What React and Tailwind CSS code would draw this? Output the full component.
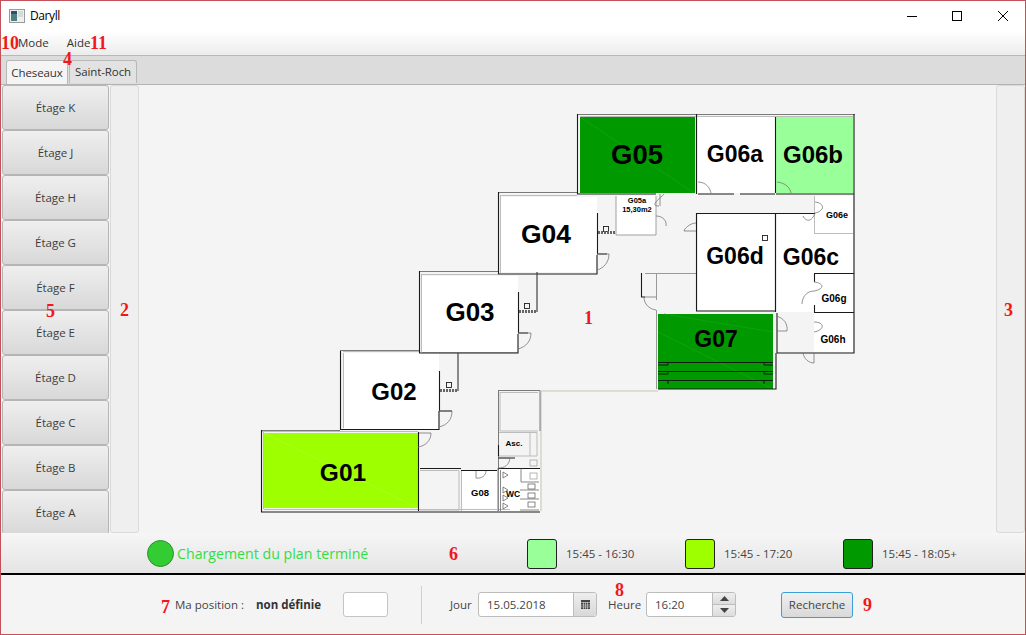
import React from "react";

const floors = ["K", "J", "H", "G", "F", "E", "D", "C", "B", "A"];

const Note = ({ x, y, children }) => (
  <span
    className="absolute z-10 font-bold text-[#f01818] text-[18px] leading-none"
    style={{ left: x, top: y, fontFamily: '"Liberation Serif", serif' }}
  >
    {children}
  </span>
);

const Rooms = [
  [580, 117, 115, 76, "#009900"],
  [698, 117, 77, 76, "#ffffff"],
  [776, 117, 77, 76, "#99ff99"],
  [616, 196, 40, 39, "#ffffff"],
  [501, 197, 96, 75, "#ffffff"],
  [422, 276, 96, 76, "#ffffff"],
  [344, 353, 95, 76, "#ffffff"],
  [264, 433, 154, 75, "#9eff00"],
  [698, 214, 76, 96, "#ffffff"],
  [777, 214, 76, 59, "#ffffff"],
  [777, 273, 37, 39, "#ffffff"],
  [815, 196, 38, 37, "#ffffff"],
  [814, 274, 39, 38, "#ffffff"],
  [814, 313, 39, 39, "#ffffff"],
  [658, 314, 115, 75, "#009900"],
  [462, 471, 35, 40, "#ffffff"],
  [498, 468, 42, 43, "#ffffff"],
];

const Labels = [
  ["G05", 637, 164, 27.5],
  ["G06a", 735, 162, 23],
  ["G06b", 813, 163, 24],
  ["G04", 546, 243, 26.5],
  ["G03", 470, 321, 26],
  ["G02", 394, 400, 24],
  ["G01", 343, 481, 24.5],
  ["G06d", 735, 264, 23],
  ["G06c", 811, 265, 23],
  ["G07", 716, 347, 23],
  ["G06e", 837, 218, 9],
  ["G06g", 834, 302, 10],
  ["G06h", 833, 343, 10],
  ["G05a", 637, 203, 7.5],
  ["15,30m2", 637, 212, 7.5],
  ["Asc.", 514, 446, 8],
  ["G08", 480, 496, 9.5],
  ["WC", 513, 497, 8.5],
];

function FloorPlan() {
  return (
    <svg width="856" height="448" viewBox="139 85 856 448" className="block">
      {Rooms.map(([x, y, w, h, c], i) => (
        <rect key={i} x={x} y={y} width={w} height={h} fill={c} />
      ))}

      {/* pale diagonals across the coloured rooms */}
      <path d="M580 117L694 193M658 332L773 389M664 314L773 332" stroke="#1ea51e" strokeWidth="0.6" fill="none" />
      <path d="M264 433L418 508" stroke="#b5ff40" strokeWidth="0.5" fill="none" />

      {/* light grey inner wall lines */}
      <g stroke="#bcbcbc" strokeWidth="1" fill="none">
        <path d="M580 116.5H853" />
        <path d="M616 196V235H656V196" stroke="#a0a0a0" />
        <path d="M501 195.5H577M500.5 195V273" />
        <path d="M421.5 275V352M422 352.5H517M421 274.5H498" />
        <path d="M343.5 353V428M345 429.5H438M343 351.5H419" />
        <path d="M263.5 431V509M264 509.5H510M262 431.5H418" />
        <path d="M814 233.5H853M814.5 196V233" />
        <path d="M500 392.5H538M500 392V431H538M420 470.5H459V510H420" />
        <path d="M498 432.5H537V456H498M530 433V456" />
        <path d="M461.5 470V511M497.5 468V511" />
      </g>
      <path d="M541 391H658" stroke="#c9c3b4" strokeWidth="1" fill="none" />
      <path d="M541 391V511" stroke="#c9c3b4" strokeWidth="1" fill="none" />
      <path d="M645 273.5H696" stroke="#999" strokeWidth="1" fill="none" />
      <path d="M656.5 273V300M656.5 310V389" stroke="#999" strokeWidth="1" fill="none" />

      {/* dark outlines */}
      <g stroke="#7a7a7a" strokeWidth="1" fill="none">
        <path d="M577 114.5H855" />
        <path d="M498 192.5H577" />
        <path d="M419 271.5H498" />
        <path d="M340 350.5H419" />
        <path d="M261 430.5H340" />
        <path d="M498 390.5H540V431M498.5 390V470" />
      </g>
      <g stroke="#1a1a1a" strokeWidth="1.1" fill="none">
        <path d="M577.5 114V194H656" />
        <path d="M696.5 114V194" />
        <path d="M775.5 117V193" />
        <path d="M854 114V353H777V313" />
        <path d="M698 194H734M740 194H775M776 194H854" />
        <path d="M696 213.5H815" />
        <path d="M696.5 213V311H775" />
        <path d="M775.5 214V312" />
        <path d="M814 273.5H854M814 312.5H854M814.5 274V282M814.5 305V312" />
        <path d="M776 353V389H658" />
        <path d="M498.5 192V274H597V255" />
        <path d="M597.5 213V254H607" />
        <path d="M419.5 271V353H518V334" />
        <path d="M518.5 292V333H528" />
        <path d="M340.5 351V430" />
        <path d="M340 429.5H439V411" />
        <path d="M439.5 371V411H452" />
        <path d="M261.5 430V512H540" />
        <path d="M418.5 432V511" />
        <path d="M420 468.5H461M461 470.5H497M498 468.5H540" />
        <path d="M498.5 445V456M498 458H515" />
        <path d="M641.5 273V297H645" />
      </g>
      <path d="M537 272V312M458 353V391" stroke="#444" strokeWidth="1.2" fill="none" />

      {/* doors */}
      <g stroke="#777" strokeWidth="0.8" fill="none">
        <path d="M698 182C706 182 710 188 711 193" />
        <path d="M777 182C786 183 790 188 791 193" />
        <path d="M660 194V206M659 206C648 206 662 197 664 194" />
        <path d="M656 216C663 216 667 221 666 226" />
        <path d="M696 223C690 223 684 229 684 231H696" />
        <path d="M815 202C825 203 825 211 815 213M815 213C812 222 806 222 803 216" />
        <path d="M597 254H609C609 262 604 268 597 270" />
        <path d="M518 333H531C531 341 526 347 518 349" />
        <path d="M439 411H452C452 420 447 425 439 427" />
        <path d="M419 433H431C431 441 425 446 418 447" />
        <path d="M656 297H644C644 304 649 309 656 310" />
        <path d="M776 316C784 318 788 324 787 331H776" />
        <path d="M814 282C824 283 825 289 814 291M814 291C806 291 802 298 802 304" />
        <path d="M814 322C825 322 825 330 814 332M803 353C804 359 809 363 814 363V353" />
        <path d="M476 471V478C482 479 486 475 486 471" />
        <path d="M498 458H510C509 465 505 468 498 468" />
      </g>

      {/* stairs */}
      <g stroke="#111" strokeWidth="0.9" fill="none">
        <path d="M658 362.5H773M658 371.5H773M658 380.5H773" />
        <path d="M658 365H668V362M658 374H668V371M668 380V384M764 362V365H773M764 371V374H773M764 380V384" />
      </g>

      {/* shafts */}
      <g fill="none" stroke="#222" strokeWidth="0.9">
        <rect x="603.5" y="226.5" width="5" height="5" />
        <rect x="524.5" y="303.5" width="5" height="5" />
        <rect x="446.5" y="382.5" width="5" height="5" />
        <rect x="762.5" y="235.5" width="5" height="5" />
      </g>
      <path d="M598 232.5H615M519 311.5H537M440 390.5H458" stroke="#666" strokeWidth="3" strokeDasharray="2 1" fill="none" />

      {/* WC fixtures */}
      <g fill="none" stroke="#555" strokeWidth="0.7">
        <path d="M503 472L508 475L503 478ZM503 487L508 490L503 493ZM503 495L508 498L503 501ZM503 503L508 506L503 509Z" />
        <path d="M498.5 468V511M500.5 470V511" />
        <path d="M521 468V482H539M520 490H539M520 499H539M520 510H539" />
        <rect x="530" y="460" width="7" height="6" stroke="#999" />
        <rect x="530" y="473" width="7" height="6" stroke="#999" />
        <rect x="528" y="484" width="7" height="5" />
        <rect x="528" y="493" width="7" height="5" />
        <rect x="528" y="502" width="7" height="5" />
      </g>

      {Labels.map(([t, x, y, s]) => (
        <text
          key={t}
          x={x}
          y={y}
          textAnchor="middle"
          fontSize={s}
          fontWeight="700"
          fill="#000"
          fontFamily='"Liberation Sans", sans-serif'
        >
          {t}
        </text>
      ))}
    </svg>
  );
}

function Swatch({ color, label, className }) {
  return (
    <div className={`flex items-center gap-[9px] ${className}`}>
      <div className="w-[30px] h-[30px] rounded-[3px] border border-[#222]" style={{ background: color }} />
      <span className="text-[11.5px] text-[#444]">{label}</span>
    </div>
  );
}

export default function App() {
  return (
    <div
      className="relative w-[1026px] h-[635px] overflow-hidden border border-[#c4505a] bg-[#f4f4f4] flex flex-col text-[12px] text-[#333]"
      style={{ fontFamily: '"Open Sans", "Noto Sans", sans-serif' }}
    >
      {/* title bar */}
      <div className="h-[30px] shrink-0 bg-white flex items-center pl-[8px]">
        <svg width="16" height="14" viewBox="0 0 16 14" className="mr-[5px]">
          <rect x="0.5" y="0.5" width="15" height="13" fill="#eef0f0" stroke="#9a9a9a" />
          <rect x="2" y="2" width="6" height="10" fill="#4d7f83" />
          <rect x="9" y="2" width="5" height="6" fill="#d3dcdc" />
          <rect x="2" y="2" width="6" height="3" fill="#2f4f6a" />
        </svg>
        <span className="text-[12px] text-black tracking-[-0.4px]">Daryll</span>
        <div className="ml-auto flex items-center">
          <svg width="140" height="30" viewBox="0 0 140 30">
            <path d="M22 15.5H32" stroke="#000" strokeWidth="1" />
            <rect x="67.5" y="10.5" width="9" height="9" fill="none" stroke="#000" strokeWidth="1" />
            <path d="M113 10L123 20M123 10L113 20" stroke="#000" strokeWidth="1" />
          </svg>
        </div>
      </div>

      {/* menu bar */}
      <div className="h-[25px] shrink-0 flex items-center gap-[18px] pl-[17px] border-b border-[#b8b8b8] bg-gradient-to-b from-white to-[#ececec] text-[11.5px]">
        <span>Mode</span>
        <span>Aide</span>
      </div>

      {/* tabs */}
      <div className="h-[29px] shrink-0 flex items-end gap-[1px] pl-[5px] bg-[#dcdcdc] border-b border-[#b4b4b4]">
        <div className="h-[24px] w-[62px] flex items-center justify-center rounded-t-[3px] border border-b-0 border-[#b8b8b8] bg-[#f4f4f4] text-[11.5px] tracking-[-0.1px]">Cheseaux</div>
        <div className="h-[23px] w-[68px] mb-[1px] flex items-center justify-center rounded-t-[3px] border border-b-0 border-[#b8b8b8] bg-[#e2e2e2] text-[11.5px] tracking-[-0.1px]">Saint-Roch</div>
      </div>

      {/* centre */}
      <div className="h-[448px] shrink-0 flex overflow-hidden">
        <div className="w-[107px] shrink-0 ml-[1px] flex flex-col">
          {floors.map((f) => (
            <div
              key={f}
              className="h-[45px] shrink-0 flex items-center justify-center rounded-[3px] border border-[#b5b5b5] bg-gradient-to-b from-[#efefef] to-[#d8d8d8] text-[11.5px] text-[#3d3d3d]"
            >
              Étage {f}
            </div>
          ))}
        </div>
        <div className="w-[29px] shrink-0 ml-[1px] rounded-[3px] border border-[#dadada] bg-[#efefef]" />
        <div className="flex-1 min-w-0 overflow-hidden">
          <FloorPlan />
        </div>
        <div className="w-[29px] shrink-0 rounded-[3px] border border-[#dadada] bg-[#efefef]" />
      </div>

      {/* status */}
      <div className="h-[40px] shrink-0 pt-[1px] flex items-center bg-gradient-to-b from-[#f6f6f6] to-[#e4e4e4]">
        <div className="w-[27px] h-[27px] ml-[146px] rounded-full bg-[#33cc33] border border-[#2a8f2a]" />
        <span className="ml-[3px] w-[350px] text-[14.2px] text-[#33dd44] whitespace-nowrap">Chargement du plan terminé</span>
        <Swatch color="#99ff99" label="15:45 - 16:30" className="w-[158px]" />
        <Swatch color="#9eff00" label="15:45 - 17:20" className="w-[158px]" />
        <Swatch color="#009900" label="15:45 - 18:05+" className="" />
      </div>
      <div className="h-[2px] shrink-0 bg-black" />

      {/* bottom form */}
      <div className="flex-1 flex items-center bg-[#f4f4f4] text-[11.5px] text-[#444]">
        <span className="ml-[174px] w-[81px]">Ma position :</span>
        <span className="w-[87px] font-bold text-[#333]">non définie</span>
        <div className="w-[45px] h-[25px] rounded-[3px] border border-[#c4c4c4] bg-white" />
        <div className="w-px h-[38px] ml-[33px] bg-[#cfcfcf]" />
        <span className="ml-[28px] w-[28px]">Jour</span>
        <div className="w-[119px] h-[25px] flex rounded-[3px] border border-[#bcbcbc] bg-white overflow-hidden">
          <span className="flex-1 pl-[8px] flex items-center">15.05.2018</span>
          <div className="w-[23px] flex items-center justify-center border-l border-[#bcbcbc] bg-gradient-to-b from-[#eeeeee] to-[#d8d8d8]">
            <svg width="9" height="9" viewBox="0 0 9 9">
              <rect width="9" height="9" fill="#444" />
              <path d="M0 2.5H9M0 5H9M0 7H9M2.5 2V9M4.5 2V9M6.5 2V9" stroke="#d8d8d8" strokeWidth="0.6" />
            </svg>
          </div>
        </div>
        <span className="ml-[11px] w-[38px]">Heure</span>
        <div className="w-[90px] h-[25px] flex rounded-[3px] border border-[#bcbcbc] bg-white overflow-hidden">
          <span className="flex-1 pl-[8px] flex items-center">16:20</span>
          <div className="w-[23px] flex flex-col border-l border-[#bcbcbc]">
            <div className="flex-1 flex items-center justify-center border-b border-[#bcbcbc] bg-gradient-to-b from-[#eeeeee] to-[#dcdcdc]">
              <svg width="9" height="5" viewBox="0 0 9 5"><path d="M0 5L4.5 0L9 5Z" fill="#444" /></svg>
            </div>
            <div className="flex-1 flex items-center justify-center bg-gradient-to-b from-[#eeeeee] to-[#dcdcdc]">
              <svg width="9" height="5" viewBox="0 0 9 5"><path d="M0 0L4.5 5L9 0Z" fill="#444" /></svg>
            </div>
          </div>
        </div>
        <div className="ml-[45px] w-[72px] h-[26px] flex items-center justify-center rounded-[3px] border border-[#3a9fd8] bg-gradient-to-b from-[#f0f0f0] to-[#d9d9d9]">
          Recherche
        </div>
      </div>

      <Note x={0} y={33}>10</Note>
      <Note x={89} y={33}>11</Note>
      <Note x={62} y={49}>4</Note>
      <Note x={45} y={301}>5</Note>
      <Note x={119} y={300}>2</Note>
      <Note x={1003} y={300}>3</Note>
      <Note x={583} y={308}>1</Note>
      <Note x={448} y={544}>6</Note>
      <Note x={160} y={597}>7</Note>
      <Note x={614} y={580}>8</Note>
      <Note x={862} y={595}>9</Note>
    </div>
  );
}
